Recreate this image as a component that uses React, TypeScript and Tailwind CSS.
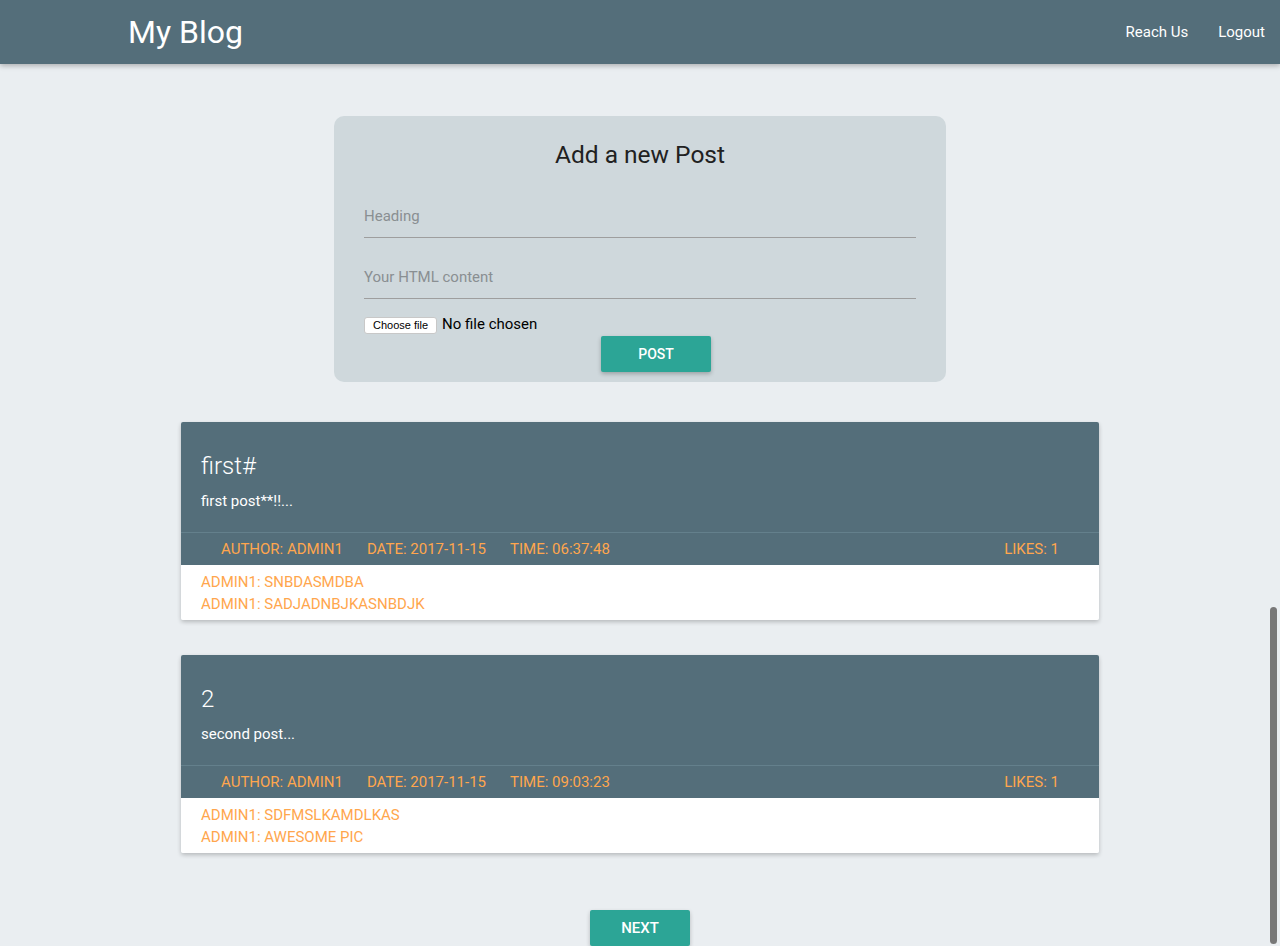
import React from 'react';

type Post = {
  title: string;
  body: string;
  author: string;
  date: string;
  time: string;
  likes: number;
  comments: string[];
};

const posts: Post[] = [
  {
    title: 'first#',
    body: 'first post**!!...',
    author: 'admin1',
    date: '2017-11-15',
    time: '06:37:48',
    likes: 1,
    comments: ['admin1: snbdasmdba', 'admin1: sadjadnbjkasnbdjk'],
  },
  {
    title: '2',
    body: 'second post...',
    author: 'admin1',
    date: '2017-11-15',
    time: '09:03:23',
    likes: 1,
    comments: ['admin1: sdfmslkamdlkas', 'admin1: awesome pic'],
  },
];

function Navbar() {
  return (
    <nav className="h-16 bg-[#546e7a] text-white flex items-center justify-between shadow-[0_2px_5px_rgba(0,0,0,0.26)] relative z-10">
      <a className="ml-[128px] text-[32px] leading-none -mt-[1px]">My Blog</a>
      <ul className="flex items-center text-[15px]">
        <li className="px-[15px]">Reach Us</li>
        <li className="px-[15px]">Logout</li>
      </ul>
    </nav>
  );
}

function NewPostForm() {
  return (
    <div className="w-[612px] mx-auto bg-[#cfd8dc] rounded-[10px] px-[30px] pt-[23px] pb-[10px]">
      <h4 className="text-center text-[24.5px] leading-8 text-[#212121]">Add a new Post</h4>

      {/* Inputs */}
      <div className="mt-[19px] h-12 pt-[5px] border-b border-[#9e9e9e] flex items-center text-[15px] text-[#8a8f92]">
        Heading
      </div>
      <div className="mt-[13px] h-12 pt-[5px] border-b border-[#9e9e9e] flex items-center text-[15px] text-[#8a8f92]">
        Your HTML content
      </div>

      <div className="mt-[16px] flex items-center gap-[5px] h-[18px]">
        <span className="inline-flex items-center h-[17px] px-[8px] bg-white border border-[#c8c8c8] rounded-[3px] text-[11px] text-black font-['Liberation_Sans',sans-serif] mt-[3px]">
          Choose file
        </span>
        <span className="text-[15px] text-black">No file chosen</span>
      </div>

      <div className="flex justify-center">
        <button className="ml-[32px] mt-[3px] w-[110px] h-9 rounded-[2px] bg-[#2ca596] text-white text-[14px] font-medium uppercase shadow-[0_2px_4px_rgba(0,0,0,0.25)]">
          Post
        </button>
      </div>
    </div>
  );
}

function PostCard({ post }: { post: Post }) {
  return (
    <div className="w-[918px] mx-auto rounded-[2px] overflow-hidden shadow-[0_2px_4px_rgba(0,0,0,0.22)]">
      <div className="bg-[#546e7a] px-5 pt-[28px] pb-[21px]">
        <div className="text-[24px] leading-8 font-light text-white">{post.title}</div>
        <p className="mt-[9px] text-[15px] leading-5 text-white">{post.body}</p>
      </div>
      <div className="bg-[#546e7a] border-t border-[#64808c] h-[33px] px-10 flex items-center justify-between text-[15px] uppercase text-[#ffa64d]">
        <div className="flex gap-6">
          <span>Author: {post.author}</span>
          <span>Date: {post.date}</span>
          <span>Time: {post.time}</span>
        </div>
        <span>Likes: {post.likes}</span>
      </div>
      <div className="bg-white px-5 pt-[6px] pb-[5px]">
        {post.comments.map((c, i) => (
          <div key={i} className="text-[15px] leading-[22px] uppercase text-[#ffa64d]">
            {c}
          </div>
        ))}
      </div>
    </div>
  );
}

export default function App() {
  return (
    <div className="min-h-screen bg-[#eaeef1] font-['Roboto',sans-serif] overflow-hidden">
      <Navbar />

      <main className="pt-[52px] pb-10">
        <NewPostForm />

        <div className="mt-10 flex flex-col gap-[35px]">
          {posts.map((p, i) => (
            <PostCard key={i} post={p} />
          ))}
        </div>

        <div className="mt-[57px] flex justify-center">
          <button className="w-[100px] h-9 rounded-[2px] bg-[#2ca596] text-white text-[15px] font-medium uppercase shadow-[0_2px_4px_rgba(0,0,0,0.22)]">
            Next
          </button>
        </div>
      </main>

      {/* overlay scrollbar thumb */}
      <div className="fixed right-[3px] top-[607px] w-[7px] h-[337px] rounded-full bg-[#787878]" />
    </div>
  );
}
